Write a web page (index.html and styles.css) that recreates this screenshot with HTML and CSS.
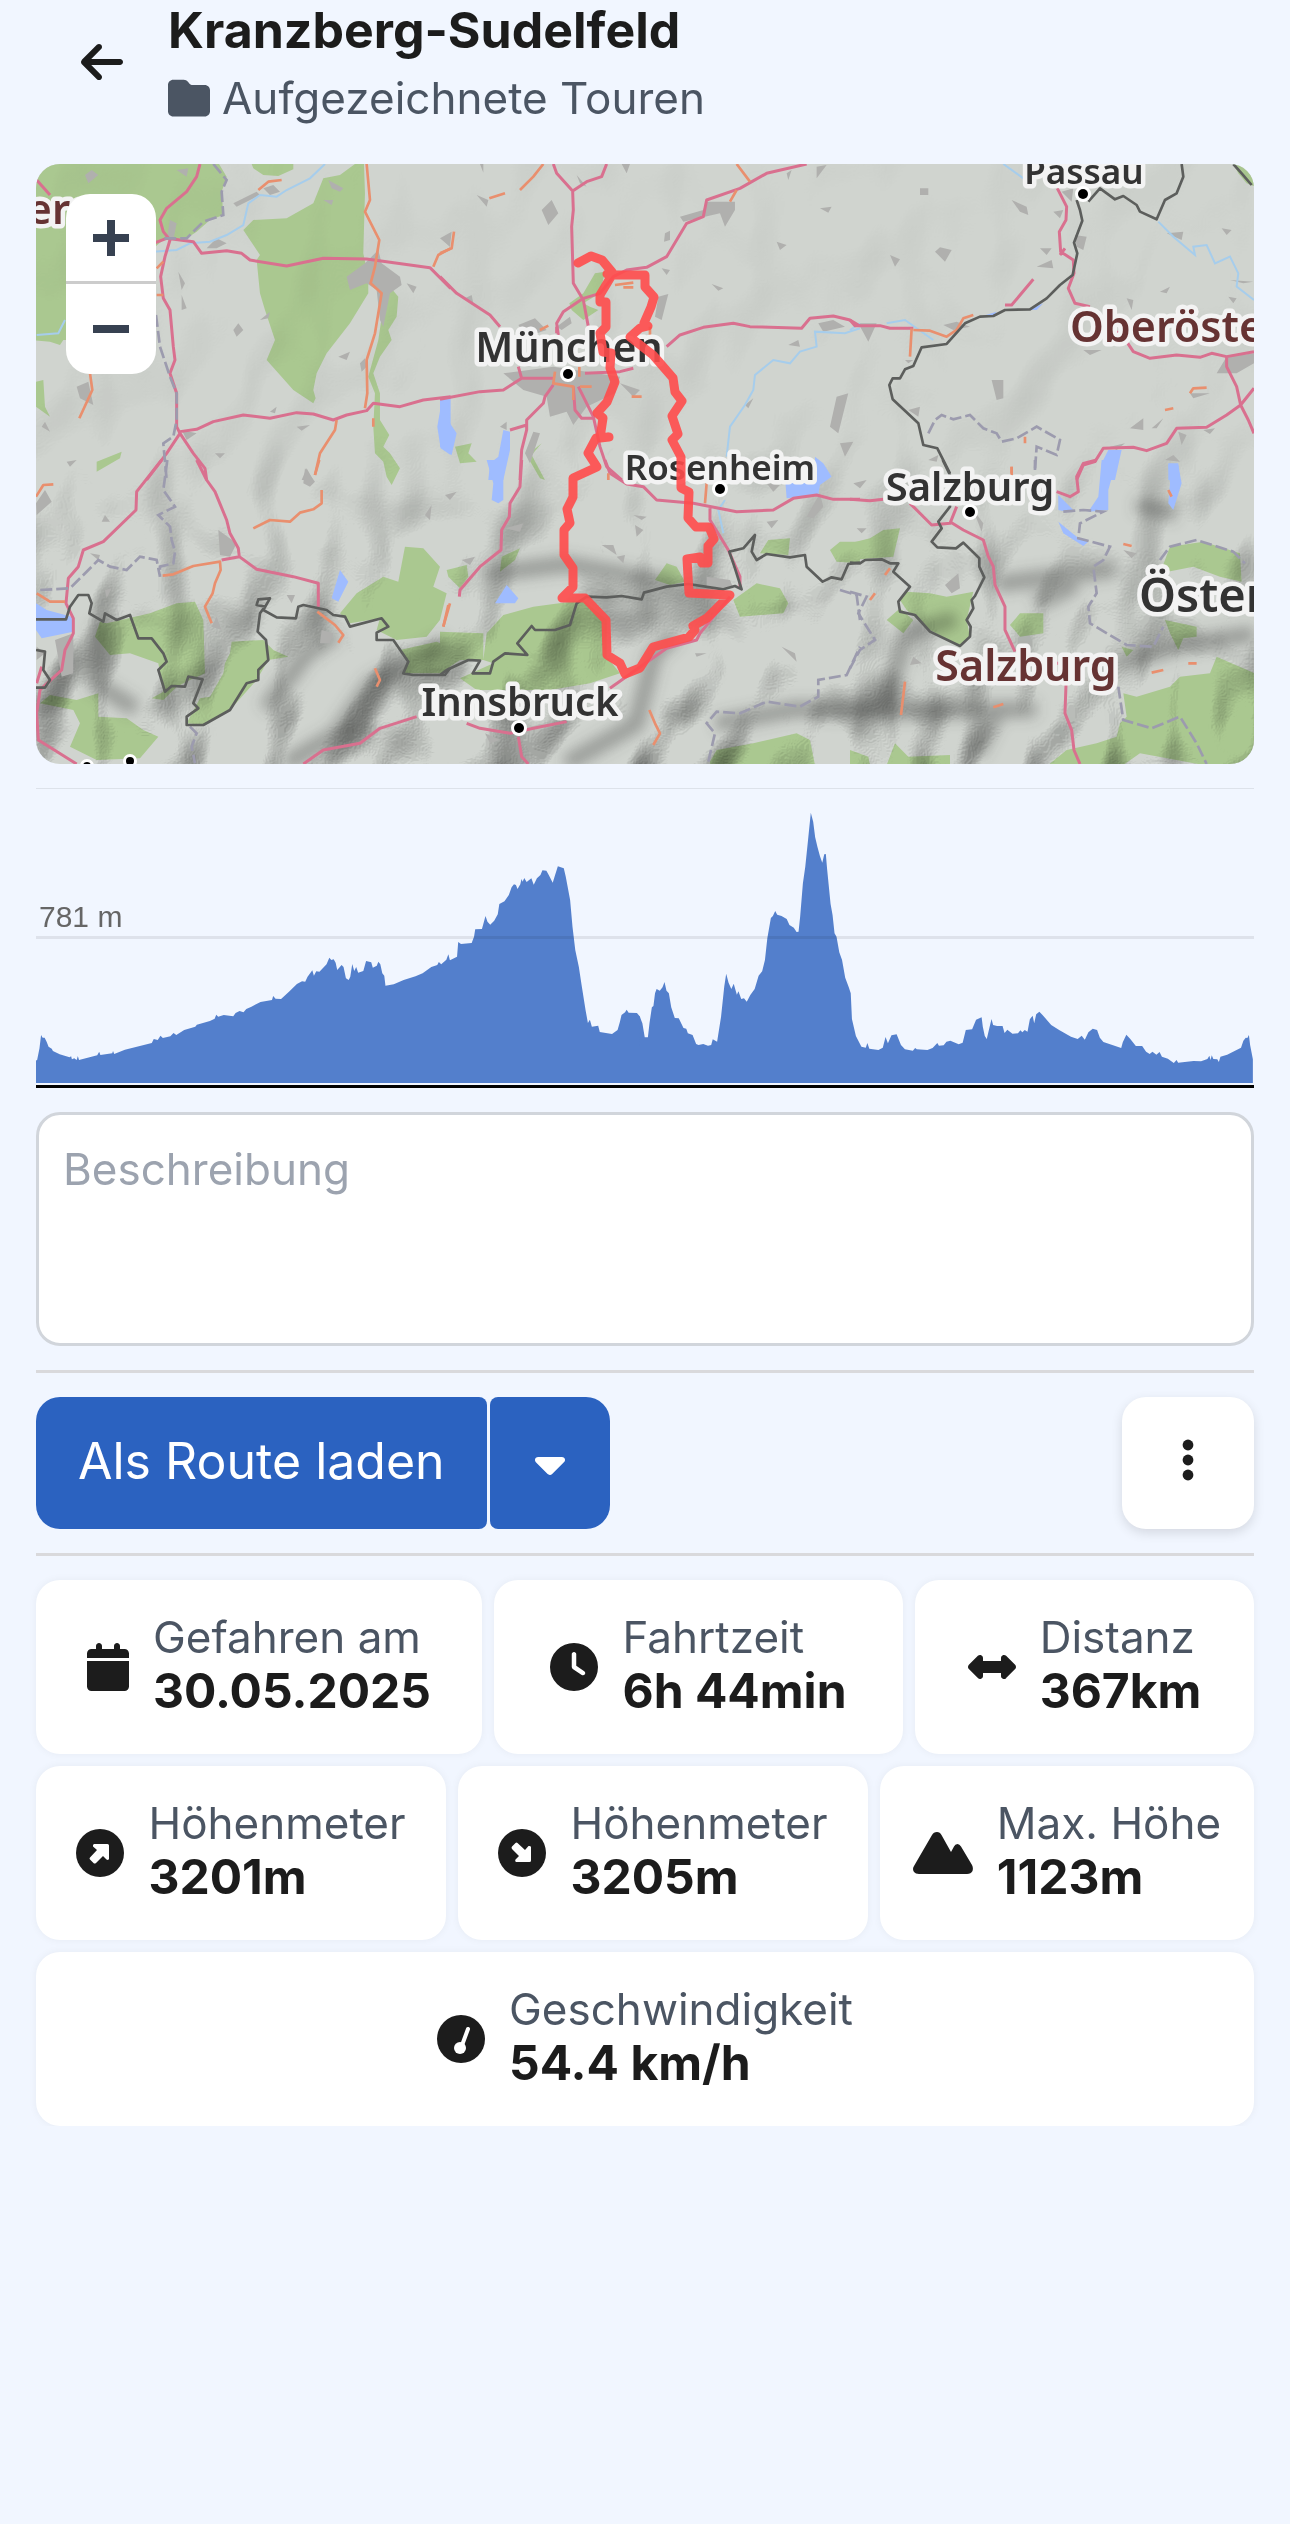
FILE: index.html
```html
<!DOCTYPE html>
<html lang="de">
<head>
    <meta charset="UTF-8">
    <meta name="viewport" content="width=device-width, initial-scale=1.0">
    <title>Kranzberg-Sudelfeld</title>
    <link rel="stylesheet" href="styles.css">
</head>
<body>
    <header class="header">
        <button type="button" class="back" aria-label="Zurück">
            <svg width="42" height="48" viewBox="0 0 448 512"><path d="M9.4 233.4c-12.5 12.5-12.5 32.8 0 45.3l160 160c12.5 12.5 32.8 12.5 45.3 0s12.5-32.8 0-45.3L109.2 288 416 288c17.7 0 32-14.3 32-32s-14.3-32-32-32l-306.7 0L214.6 118.6c12.5-12.5 12.5-32.8 0-45.3s-32.8-12.5-45.3 0l-160 160z"/></svg>
        </button>
        <div>
            <h1 class="title">Kranzberg-Sudelfeld</h1>
            <p class="folder">
                <svg width="42" height="42" viewBox="0 0 512 512"><path d="M64 480H448c35.3 0 64-28.7 64-64V160c0-35.3-28.7-64-64-64H288c-10.1 0-19.6-4.7-25.6-12.8L243.2 57.6C231.1 41.5 212.1 32 192 32H64C28.7 32 0 60.7 0 96V416c0 35.3 28.7 64 64 64z"/></svg>
                Aufgezeichnete Touren
            </p>
        </div>
    </header>

    <main class="content">
        <div class="map">
            <svg class="map-canvas" viewBox="0 0 1218 600" preserveAspectRatio="xMidYMid slice" role="img" aria-label="Karte der Tour">
                <defs>
                    <filter id="relief" x="0" y="0" width="100%" height="100%" color-interpolation-filters="sRGB">
                        <feTurbulence type="fractalNoise" baseFrequency="0.014 0.009" numOctaves="2" seed="11"/>
                        <feColorMatrix type="matrix" values="0 0 0 0 0  0 0 0 0 0  0 0 0 0 0  1 0 0 0 0"/>
                        <feGaussianBlur stdDeviation="3"/>
                        <feDiffuseLighting surfaceScale="32" diffuseConstant="1.25" lighting-color="#fff">
                            <feDistantLight azimuth="235" elevation="54"/>
                        </feDiffuseLighting>
                    </filter>
                    <linearGradient id="fade" x1="0" y1="0" x2="0" y2="1">
                        <stop offset="0" stop-color="#fff" stop-opacity=".04"/>
                        <stop offset=".45" stop-color="#fff" stop-opacity=".08"/>
                        <stop offset=".72" stop-color="#fff" stop-opacity=".5"/>
                        <stop offset="1" stop-color="#fff" stop-opacity=".75"/>
                    </linearGradient>
                    <mask id="alps"><rect width="1218" height="600" fill="url(#fade)"/></mask>
                    <filter id="soft"><feGaussianBlur stdDeviation="7"/></filter>
                </defs>
                <rect width="1218" height="600" fill="#d0d4cf"/>

                <!-- forest -->
                <g class="forest">
                    <path transform="translate(-6 -4) scale(.3333)" d="M0 0H560L590 50 575 95 580 165 540 180 500 215 470 235 400 240 340 290V540H100L90 555 60 545 0 540ZM975 12H1002L1005 100 1000 280 1015 350 1015 400 960 490 890 580 860 640 850 690 857 715 850 730 790 690 710 600 735 540 705 450 690 400 680 300 690 285 640 210 670 180 770 175 850 130 880 55 930 45ZM665 12H790V28L745 48 700 45 670 25ZM1080 380L1105 410 1100 470 1075 510 1085 540 1050 590 1030 640 1050 700 1050 780 1078 825 1060 860 1080 880 1110 925 1085 975 1070 950 1060 905 1035 880 1030 800 1035 700 1015 650 1045 540 1060 440ZM200 905L275 875 270 895 200 935ZM18 665L40 660 45 740 60 770 18 740Z"/>
                    <path transform="translate(404 -4) scale(.3333)" d="M465 340L495 335 480 400 430 430 450 440 475 450 430 480 395 450 388 430 430 400ZM45 860L95 850 85 880 110 905 60 910ZM305 850L275 885 315 960 300 955 268 900 280 870Z"/>
                    <path transform="translate(814 -4) scale(.3333)" d="M1150 12H1215V80L1190 70 1165 40Z"/>
                    <path transform="translate(-6 296) scale(.3333)" d="M230 490L360 460 440 430 495 425 520 480 525 640 480 660 440 680 400 720 365 715 400 695 385 610 300 580 240 585 195 530 210 485ZM605 545L700 540 730 570 775 590 715 600 680 660 600 750 520 795 470 790 510 715 540 710 580 640 585 610 600 580ZM120 860L150 790 130 750 30 730 60 705 140 720 205 700 205 770 290 775 340 810 385 830 330 895 200 900ZM930 460L980 400 1060 350 1105 365 1125 260 1180 265 1230 320 1210 380 1250 400 1230 480 1190 530 1100 540 1040 510 1050 475 960 490ZM1110 570L1220 545 1260 560V620L1240 640 1120 640 1135 600Z"/>
                    <path transform="translate(404 296) scale(.3333)" d="M0 515L130 520V600L60 600 0 640ZM130 600L140 520 190 465 280 440 430 420 500 480 500 590 540 640 450 670 330 690 110 690 60 655 160 610ZM20 330L80 315 85 350 60 385 25 350ZM185 290L240 265 225 300 180 335ZM645 360L680 310 710 320 735 365 690 375ZM880 420L950 370 1020 385 1045 430 1030 460 900 470ZM960 280L985 240 1050 235 1045 285ZM1170 270L1200 245 1260 245V310L1190 305ZM810 905L830 870 940 850 1070 820 1110 840 1125 915H810Z"/>
                    <path transform="translate(814 296) scale(.3333)" d="M0 250L60 235 100 210 150 205 130 290 0 300ZM150 420L170 395 240 400 290 410 370 395 350 480 360 530 330 560 240 510 170 450ZM110 480L150 445 190 480 160 520ZM480 495L510 460 580 460 580 520 510 530ZM930 340L960 260 1060 245 1170 280 1175 365 1110 350 1030 320ZM945 480L1040 500 1040 530 1000 535 985 570 960 520ZM820 700L860 710 960 680 990 650 1080 640 1100 590 1215 640V915H1060L870 880 820 915H595L650 870 740 850 800 830 810 790 830 770ZM110 915L135 850 175 890 300 885V915ZM0 870L55 890 60 915H0ZM815 560L850 570 830 590Z"/>
                </g>

                <!-- hill shading -->
                <g class="shade">
                    <rect x="-10" y="-10" width="1238" height="630" filter="url(#relief)" mask="url(#alps)"/>
                    <g class="valley" filter="url(#soft)">
                        <path d="M250 600L300 570 335 520 372 500 410 478M230 545L270 490 300 470M530 600L600 560 618 490 640 470M65 460L60 520 100 545M680 560L760 545 860 548 1000 545M850 540L870 470 920 455M1080 500L1150 480 1218 470M1000 440L1040 420M450 410L530 400 640 420M960 420L1080 405M1100 340L1140 350M940 590L960 550"/>
                    </g>
                </g>

                <!-- built-up areas -->
                <g class="town">
                    <path transform="translate(-6 -4) scale(.3333)" d="M165 45L185 30 205 45 175 70ZM440 30L475 25 470 50ZM700 85L730 75 750 95 720 105ZM610 130L680 95 690 105 620 140ZM880 120L910 120 905 135ZM895 60L940 85 930 95 905 85ZM530 265L560 235 590 250 560 265ZM410 240L420 180 440 190 430 240ZM445 335L465 370 455 390ZM455 405L470 445 455 450ZM610 510L625 490 640 510 620 530ZM690 480L720 455 715 475ZM1005 310L1045 270 1055 310 1110 350 1115 375 1080 400 1060 500 1050 480 1040 390 1010 370 960 390 950 350ZM1130 370L1160 380 1150 400ZM925 590L960 575 950 600ZM990 610L1005 595 1010 620 995 635ZM140 680L175 665 190 735 150 715ZM110 905L140 900 120 920ZM555 880L585 880 570 895ZM720 755L740 740 735 760ZM800 800L840 795 815 812ZM455 810L500 820 470 840ZM35 800L45 785 60 815ZM815 960L830 925 850 960ZM1240 240L1260 225V260Z"/>
                    <path transform="translate(404 -4) scale(.3333)" d="M305 150L335 120 355 160 325 195ZM110 105L145 120 140 140ZM410 45L440 80 420 70ZM720 170L790 150 800 125 885 125 885 150 855 200 840 160 730 185ZM675 220L690 212 690 240 672 245ZM1010 245L1040 255 1020 270ZM815 372L850 385 835 392ZM665 325L690 330 680 345ZM655 410L685 402 665 480 645 470ZM235 495L285 475 320 510 260 530ZM190 640L340 620 540 650 525 700 440 740 400 795 380 755 330 770 320 710 250 690ZM350 500L390 470 395 490 365 510ZM540 670L600 690 580 710ZM1045 555L1075 540 1080 560ZM1135 490L1180 480 1215 500 1150 515ZM1170 800L1190 710 1225 700 1195 820ZM1200 850L1240 845 1215 890ZM915 735L940 715 925 745ZM180 800L200 785 200 810ZM255 880L280 815 300 820 270 910ZM75 415L95 405 100 430ZM0 235L35 215 30 260ZM1040 40L1055 30 1045 60ZM1130 20L1160 15 1130 55ZM1140 145L1175 140 1165 158ZM120 12H130V38ZM545 12H570L560 40Z"/>
                    <path transform="translate(814 -4) scale(.3333)" d="M210 85H235V105H210ZM485 120L530 140 535 165 510 155ZM255 275L270 262 305 270 285 305ZM120 285L150 298 135 320ZM610 155L640 150 630 175ZM570 265L605 265 590 285ZM560 320L605 300 610 325ZM675 225L710 230 700 270 680 260ZM635 95L670 85 665 125ZM950 220L1000 215 995 240ZM1115 205L1145 210 1130 225ZM830 415L850 420 845 450ZM930 395L960 380 950 400ZM1140 360L1210 365 1180 370ZM1135 410L1160 415 1150 430ZM280 495L320 485 360 500 310 510ZM25 490L80 490 55 545ZM425 660L460 660 460 715 440 720ZM175 750L210 740 205 770ZM700 570L755 570 720 585ZM1130 590L1212 580V610L1160 640 1100 640ZM1020 700L1080 700 1030 715ZM840 805L880 775 880 810ZM905 805L940 775 920 805ZM985 815L1010 825 995 855ZM1060 810L1095 805 1080 822ZM780 860L825 850 800 870ZM945 900L970 885 990 905ZM235 900L265 885 260 905ZM165 600H190L175 610Z"/>
                    <path transform="translate(-6 296) scale(.3333)" d="M820 70L825 25 855 65 840 80ZM565 210L620 250 600 290 570 285ZM18 130L45 90 65 125 20 165ZM215 185L225 165 240 185ZM180 280L210 285 205 300ZM225 390L245 385 230 415ZM1185 165L1205 135 1200 180ZM770 405L795 405 785 430ZM875 510L910 520 900 550 870 550ZM75 540L130 520 130 640 95 650ZM20 560L45 580 20 600ZM545 500L560 470 575 510Z"/>
                    <path transform="translate(404 296) scale(.3333)" d="M15 105L50 95 30 120ZM195 205L250 190 240 215ZM65 300L105 290 90 315ZM580 165L620 170 605 180ZM585 195L610 210 590 230ZM485 255L520 255 530 285ZM530 290L555 285 550 310ZM980 185L1015 180 995 205ZM1100 170L1140 100 1150 140 1120 175ZM765 580L800 580 770 590ZM1025 560L1065 580 1070 605ZM135 820L180 840 150 850ZM800 350L870 360 880 385 800 380ZM980 70L1020 75 1000 95Z"/>
                    <path transform="translate(814 296) scale(.3333)" d="M10 70L50 60 30 85ZM20 205L50 205 35 220ZM370 150L400 190 395 215ZM820 270L860 280 845 295ZM285 375L325 340 330 385 305 400ZM190 590L215 610 180 615Z"/>
                </g>

                <!-- rivers and lakes -->
                <g class="river">
                    <path transform="translate(-6 -4) scale(.3333)" d="M885 12L840 55 770 90 740 110 690 105 655 130 640 195 590 225 540 245 480 250 440 270 370 275M105 480L85 520 20 525"/>
                    <path transform="translate(404 -4) scale(.3333)" d="M1260 505L1215 520 1125 515 1130 560 1080 575 1050 610 1000 600 945 645 940 690 915 735 870 800 860 890"/>
                    <path transform="translate(814 -4) scale(.3333)" d="M460 12L520 55M925 185L970 230 1035 285 1030 260 1070 255 1095 310 1140 290 1165 340 1160 380 1212 420M0 510L30 490M110 490L165 480 250 540"/>
                    <path transform="translate(404 296) scale(.3333)" d="M855 120L835 150 850 220M800 490L780 520"/>
                </g>
                <g class="lake">
                    <path transform="translate(-6 -4) scale(.3333)" d="M1235 725L1262 715V885L1232 865 1222 800Z"/>
                    <path transform="translate(404 -4) scale(.3333)" d="M0 720L25 715 30 790 50 820 35 885 0 860ZM190 810L210 815 210 870 190 960H145L150 910 175 890Z"/>
                    <path transform="translate(814 -4) scale(.3333)" d="M775 870L815 870 795 960H755L755 910ZM955 910L985 910 990 960H955ZM390 470L440 455 430 468ZM535 450L580 430 560 450Z"/>
                    <path transform="translate(-6 296) scale(.3333)" d="M930 330L955 365 925 425 905 415ZM18 430L50 450 125 470 130 515 35 535 18 510Z"/>
                    <path transform="translate(404 296) scale(.3333)" d="M140 0H190V120L175 130 155 120 160 70ZM1125 -10L1150 10 1175 50 1140 75 1135 105 1040 115 1035 50 1125 60ZM200 375L235 415 225 430 165 430Z"/>
                    <path transform="translate(814 296) scale(.3333)" d="M755 0H800L775 90 775 150 715 155 745 110ZM955 15L985 15 995 70 970 150 955 130 960 70ZM625 105L670 150 650 155 625 150ZM625 185L680 230 715 245 700 258 640 220Z"/>
                </g>

                <!-- roads -->
                <g class="road">
                    <path transform="translate(-6 -4) scale(.3333)" d="M510 12L500 50 470 95 410 145 390 180 400 215 420 240 405 290 392 350 400 415 420 450 430 560 435 600 420 640 440 700 440 800 450 820 410 880 350 960M370 250L410 235 490 245 515 280 590 272 635 280 660 300 770 318 880 295 1010 297 1200 323 1262 385M450 815L500 808 550 785 640 765 720 775 800 758 850 762 910 780 950 765 1010 752 1030 730 1110 740 1180 720 1262 710M450 820L490 880 525 925 530 960M20 60L60 105"/>
                    <path transform="translate(404 -4) scale(.3333)" d="M340 12L350 40 398 93 400 150 395 200 400 370 430 420 445 500M398 93L440 65 485 50 500 12M0 350L50 400 150 465 180 500M0 718L120 695 190 690 245 655 340 655M245 655L235 620M350 500L350 520M355 525L350 490 370 455 430 415 480 400 520 350 560 330 620 322 680 290 740 190 790 170 800 120 900 85 980 40 1100 12M680 560L720 525 790 502 880 490 930 500 1085 505 1110 475 1180 468 1230 480 1260 498M340 675L315 710 310 730 260 780 260 810 245 870 240 960M210 810L260 795M400 680L405 750 425 775 460 775M415 680L460 770 480 860 500 920 545 960M435 640L540 635 580 625"/>
                    <path transform="translate(814 -4) scale(.3333)" d="M0 480L15 497 90 497 120 505 190 505M465 435L485 435 550 358M622 85L650 140 648 180 628 215 632 275 670 300 672 340 655 385 675 430 720 440M630 285L645 265M800 515L830 545 850 575 900 595 980 585 1050 592 1085 580 1130 590 1212 575M1130 590L1130 620 1160 680 1172 735 1195 780 1212 820M1212 685L1172 735 1130 765 1070 802 980 805 950 850 890 872 850 862 760 865 735 905 700 915 680 960"/>
                    <path transform="translate(-6 296) scale(.3333)" d="M395 0L320 95 318 150 220 245 160 270 145 320 115 355 108 430 130 475 130 520 105 570 95 630 30 690 20 760 25 840 140 912M20 670L35 620M500 0L530 60 555 95 590 180 600 220 625 265 628 290 575 300M628 290L680 328 790 350 865 370 865 440M820 912L880 870 990 850 1050 805 1160 770"/>
                    <path transform="translate(404 296) scale(.3333)" d="M245 0L240 80 210 130 208 170 185 210 183 270 120 320 60 390 58 410M495 0L510 40 560 72 610 80 650 120 760 130 890 155 1000 150 1060 115 1130 105 1180 118 1260 118M810 145L810 180 865 270 900 350 900 385M870 410L780 520 770 540 680 565 510 685M80 790L120 805 210 820 280 805 380 785M235 830L245 890 265 912"/>
                    <path transform="translate(814 296) scale(.3333)" d="M0 118L60 122 100 118M180 130L245 195 300 190 320 140M300 185L340 210 400 240 415 290 430 320 435 375 465 440 465 510 495 575M610 610H640M648 675L645 760 665 810 672 870 690 912M740 0L700 10 680 50 685 95 660 110 620 95"/>
                </g>
                <g class="road minor">
                    <path transform="translate(-6 -4) scale(.3333)" d="M1010 12L1020 120 1005 155 1048 240 1035 320 1022 370 1055 400 1035 520 1010 600 1012 700 1005 745M685 90L715 65 755 60M920 780L915 810 870 880 855 945M180 640L187 690 148 775M400 305L380 325M380 405H400M1210 320L1225 285 1262 265M1030 775V800"/>
                    <path transform="translate(404 -4) scale(.3333)" d="M148 115L195 100M240 90L280 50 310 12M890 12L930 65M890 90L870 125M0 280L35 265 42 215M300 510L325 497M345 635L340 670 400 680 400 720M420 680H455M575 710L605 710M525 375L580 368M550 382H580M630 500V525M418 620V650"/>
                    <path transform="translate(814 -4) scale(.3333)" d="M185 505L180 590M190 510L240 512 290 530 320 510 340 475 370 465M1020 700L1030 685 1070 683M945 750L970 745M525 850L525 830M485 920V945"/>
                    <path transform="translate(-6 296) scale(.3333)" d="M868 0L855 45M875 90L875 130 850 148 810 158 780 185 720 180 670 205M18 110L40 75 70 73M398 347L430 343 490 318 570 305 572 330 555 370 548 400 525 440 545 490M20 400L60 425 105 425M862 455L915 495 940 525 925 548M1035 625L1050 660 1040 680M1260 430L1240 500"/>
                    <path transform="translate(404 296) scale(.3333)" d="M25 435L10 500M800 70L795 130M628 750L645 790 660 820 640 855M505 40V60"/>
                    <path transform="translate(814 296) scale(.3333)" d="M485 20V40M955 90L965 110M105 345L120 325M60 420L75 400M165 665L153 765M430 742L460 732M905 638L940 630M1015 610H1040M820 252L845 258"/>
                </g>

                <!-- borders -->
                <g class="region">
                    <path transform="translate(-6 -4) scale(.3333)" d="M550 12L590 60 575 95 580 165 520 185 470 235 400 235M378 465L390 560 420 650 440 700 440 780 430 830 400 850 410 960"/>
                    <path transform="translate(814 -4) scale(.3333)" d="M235 820L255 780 275 765 310 778 360 765 400 805 440 820 455 845 500 835 560 800 630 840 620 885 560 860 555 930"/>
                    <path transform="translate(-6 296) scale(.3333)" d="M412 0L400 90 435 140 385 165 420 200 425 240 435 275 430 310 390 320 390 350 380 300 330 290 290 330 240 320 205 300 120 385 30 390M480 800L500 820 485 860 495 910"/>
                    <path transform="translate(404 296) scale(.3333)" d="M805 905L825 820 800 790 830 755 900 760 980 725 1080 740 1135 710 1135 660 1220 645 1260 560M1200 390L1250 405 1260 480"/>
                    <path transform="translate(814 296) scale(.3333)" d="M555 0V30M640 155L700 150 760 155 690 190 685 235 780 260 760 300 730 320 740 400 715 440 720 490 830 555 910 560 940 500M930 300L960 260 1040 240 1150 275 1185 310M805 680L820 780 905 805 990 770 1040 850 1070 912M0 395L50 410 25 460 75 540 30 570 0 625"/>
                </g>
                <g class="border">
                    <path transform="translate(814 -4) scale(.3333)" d="M680 120L690 150 697 182 672 248 682 280 668 345 630 375 590 415 540 448 465 450 430 468 390 470 345 490 290 552 215 562 190 618 165 628 150 655 128 655 118 675 128 718 205 790 220 855 262 865 300 940M715 125L750 85 795 118 820 108 860 135 870 155 920 178 945 120 980 100 1000 50 995 12M1150 12L1175 40 1205 75"/>
                    <path transform="translate(-6 296) scale(.3333)" d="M18 478H108L120 440 145 405 175 405 185 430 178 460 220 485 225 460 260 480 300 465 325 535 365 535 400 580 410 605 385 630 405 695 425 678 465 680 475 650 518 658 490 730 505 745 470 770 470 795 520 795 600 750 650 670 685 660 685 630 715 600 708 540 683 515 690 460 705 440 680 435 685 418 720 415 700 450 740 472 798 475 805 440 820 435 890 450 910 465 945 470 960 500 1055 475 1075 500 1040 518 1040 540 1090 540 1135 605 1120 640 1150 645H1245L1260 625M18 570L45 575 40 630 60 660 45 683H18"/>
                    <path transform="translate(404 296) scale(.3333)" d="M0 645L20 630 85 600 120 602 98 640 150 640 160 605 195 580 262 585 232 550 275 498 285 510 345 510 390 495 410 430 440 410 500 412 545 408 605 418 612 398 680 380 745 372 850 388 885 378 905 388 885 325 868 275 910 265 945 225 935 275 950 300 980 282 1050 292 1095 285 1100 320 1148 365 1175 352 1205 358 1225 312 1260 308"/>
                    <path transform="translate(814 296) scale(.3333)" d="M278 0L300 45 300 140 265 185 275 205 245 245 262 262 318 265 340 248 388 295 388 320 403 352 375 408 365 420 370 445 350 480 362 500 360 530 330 558 240 515 195 465 150 455 145 425 180 380 130 335 145 310 120 310 95 298 45 300 30 310 0 308"/>
                </g>

                <g class="place">
                    <text x="533" y="198" font-size="41">München</text>
                    <text x="684" y="316" font-size="35">Rosenheim</text>
                    <text x="484" y="552" font-size="40">Innsbruck</text>
                    <text x="934" y="337" font-size="40">Salzburg</text>
                    <text x="1048" y="20" font-size="35">Passau</text>
                    <text x="1103" y="448" font-size="47" class="start">Österreich</text>
                    <text x="1034" y="178" font-size="43" class="start state">Oberösterreich</text>
                    <text x="990" y="517" font-size="43" class="state">Salzburg</text>
                    <text x="60" y="60" font-size="42" class="end state">Baden-Württemberg</text>
                </g>
                <g class="dot">
                    <circle cx="532" cy="210" r="5"/>
                    <circle cx="684" cy="325" r="5"/>
                    <circle cx="483" cy="564" r="5"/>
                    <circle cx="934" cy="348" r="5"/>
                    <circle cx="1047" cy="30" r="5"/>
                    <circle cx="94" cy="597" r="4"/>
                    <circle cx="51" cy="602" r="4"/>
                </g>

                <g class="track">
                    <path d="M542 99L555 92 566 96 576 108 571 110 577 111H609V123L618 133 615 143 608 159 612 162 604 164 594 173 617 191 637 214 639 228 646 237 636 252 642 270 636 276 645 293V324L653 328 652 354 660 363H673L678 375 672 382V399H666L664 393 651 395 653 429 694 431 671 454 657 462 659 466 653 473 617 483 604 504 589 510 584 499 571 491 570 456 549 434H526L537 423V404L528 391V366L534 359 531 345 537 333V314L561 303 552 289 560 274 573 273 564 274 567 254 561 249 571 238 579 218 574 204 575 189 567 188 564 169 570 163V138H564V131L576 111"/>
                </g>
            </svg>
            <div class="zoom">
                <button type="button" aria-label="Vergrößern">
                    <svg width="36" height="36" viewBox="0 0 36 36"><path d="M14 0h8v14h14v8H22v14h-8V22H0v-8h14z"/></svg>
                </button>
                <button type="button" aria-label="Verkleinern">
                    <svg width="36" height="36" viewBox="0 0 36 36"><path d="M0 14h36v8H0z"/></svg>
                </button>
            </div>
        </div>

        <svg class="profile" viewBox="0 0 1218 300" role="img" aria-label="Höhenprofil">
            <g class="area">
                <path transform="translate(-6 -8) scale(.3954 .3333)" d="M15 909V842L18 840 24 805 28 765 32 773 37 773 42 785 47 800 55 806 58 813 75 823 100 832 104 829 106 838 112 835 118 840 121 828 124 840 170 826 175 815 178 825 208 820 210 813 213 822 240 809 308 789 313 777 323 780 330 767 336 774 355 769 363 759 370 765 390 750 418 740 422 734 455 723 467 716 471 704 476 710 490 705 514 709 520 699 530 693 540 697 547 687 560 680 583 666 612 660 615 648 621 656 635 657 655 635 675 612 688 604 696 605 702 590 714 571 718 587 724 574 732 575 750 553 757 533 762 540 768 538 773 548 777 570 788 555 793 561 799 595 806 600 810 590 815 552 820 573 825 561 830 578 843 573 850 543 863 547 867 563 877 557 881 545 886 553 891 580 896 587 899 617 920 613 945 600 975 589 993 580 1015 561 1030 555 1034 546 1040 553 1053 539 1058 523 1062 541 1080 530 1083 486 1090 492 1117 489 1123 470 1126 448 1143 447 1152 408 1157 425 1164 434 1174 422 1183 403 1187 372 1200 364 1211 345 1218 322 1224 313 1229 315 1233 327 1240 313 1243 297 1246 305 1250 294 1256 306 1268 295 1274 314 1282 295 1291 285 1296 271 1306 272 1312 285 1322 308 1328 285 1335 259 1350 265 1355 290 1366 360 1372 440 1379 510 1388 560 1395 615 1405 690 1411 729 1416 719 1421 740 1437 737 1441 756 1472 762 1486 750 1492 725 1496 705 1505 697 1509 689 1514 698 1535 699 1543 710V909Z"/>
                <path transform="translate(604 -8) scale(.3954 .3333)" d="M-2 909V708L0 712 6 730 12 772 20 772 24 730 30 682 34 678 38 640 42 627 50 632 57 622 62 606 67 632 73 640 79 682 88 714 98 715 110 744 117 746 121 760 133 765 142 792 148 795 160 792 172 797 180 795 184 778 195 785 205 710 213 620 218 581 224 608 231 627 237 611 245 644 249 634 256 657 263 655 270 665 279 645 290 627 300 587 309 574 316 540 322 475 331 414 336 408 342 393 347 404 358 408 371 417 378 435 389 443 396 456 401 455 405 410 412 310 418 260 425 180 432 98 438 125 443 172 449 202 455 228 461 248 466 223 470 222 473 265 482 372 487 405 492 460 497 470 504 517 511 540 519 593 528 622 533 640 536 717 546 768 560 800 571 803 575 789 580 806 603 810 614 803 621 771 627 790 636 766 649 763 660 795 670 808 690 812 696 804 700 808 727 810 740 804 752 789 756 797 768 796 775 785 785 782 800 790 806 793 816 788 824 750 840 748 850 719 864 712 867 740 872 768 877 777 884 742 889 717 893 735 903 738 917 738 922 759 929 749 942 761 956 760 962 751 967 757 973 750 980 755 986 718 993 707 997 730 1002 703 1010 695 1018 705 1040 735 1060 750 1090 770 1107 777 1117 767 1125 779 1134 757 1145 746 1156 750 1163 773 1172 786 1217 804 1221 787 1230 764 1240 777 1254 798 1270 798 1280 815 1289 822 1296 815 1306 824 1314 816 1320 830 1335 836 1350 849 1357 840 1361 848 1400 843 1419 844 1435 837 1440 827 1443 840 1446 826 1450 837 1460 838 1464 846 1468 830 1485 824 1520 803 1526 782 1532 773 1536 774 1540 765 1543 795 1550 838V909Z"/>
            </g>
            <path class="grid-top" d="M0 .5H1218"/>
            <path class="grid" d="M0 149.500H1218"/>
            <path class="axis" d="M0 298.500H1218"/>
            <text x="3" y="139">781 m</text>
        </svg>

        <textarea class="description" placeholder="Beschreibung" aria-label="Beschreibung"></textarea>

        <hr>

        <div class="actions">
            <div class="split">
                <button type="button" class="load">Als Route laden</button>
                <button type="button" class="more" aria-label="Weitere Optionen">
                    <svg width="30" height="48" viewBox="0 0 320 512"><path d="M137.4 374.6c12.500 12.500 32.800 12.500 45.300 0l128-128c9.200-9.200 11.900-22.900 6.900-34.900s-16.600-19.800-29.600-19.800L32 192c-12.900 0-24.600 7.800-29.600 19.800s-2.200 25.700 6.900 34.900l128 128z"/></svg>
                </button>
            </div>
            <button type="button" class="menu" aria-label="Menü">
                <svg width="12" height="48" viewBox="0 0 12 48"><circle cx="6" cy="6" r="5.400"/><circle cx="6" cy="21" r="5.400"/><circle cx="6" cy="36" r="5.400"/></svg>
            </button>
        </div>

        <hr>

        <section class="stats">
            <div class="row row-1">
                <div class="card">
                    <svg width="42" height="48" viewBox="0 0 448 512"><path d="M96 32V64H48C21.500 64 0 85.500 0 112v48H448V112c0-26.500-21.500-48-48-48H352V32c0-17.700-14.300-32-32-32s-32 14.300-32 32V64H160V32c0-17.700-14.300-32-32-32S96 14.300 96 32zM448 192H0V464c0 26.500 21.500 48 48 48H400c26.500 0 48-21.500 48-48V192z"/></svg>
                    <dl><dt>Gefahren am</dt><dd>30.05.2025</dd></dl>
                </div>
                <div class="card">
                    <svg width="48" height="48" viewBox="0 0 512 512"><path d="M256 0a256 256 0 1 1 0 512A256 256 0 1 1 256 0zM232 120V256c0 8 4 15.500 10.700 20l96 64c11 7.400 25.900 4.400 33.300-6.700s4.400-25.900-6.700-33.300L280 243.200V120c0-13.300-10.700-24-24-24s-24 10.700-24 24z"/></svg>
                    <dl><dt>Fahrtzeit</dt><dd>6h 44min</dd></dl>
                </div>
                <div class="card">
                    <svg width="48" height="48" viewBox="0 0 512 512"><path d="M406.600 374.600l96-96c12.500-12.500 12.500-32.800 0-45.300l-96-96c-9.200-9.200-22.900-11.900-34.900-6.900s-19.800 16.600-19.800 29.600l0 32L160 192l0-32c0-12.900-7.800-24.600-19.800-29.600s-25.700-2.200-34.900 6.900l-96 96c-12.500 12.500-12.500 32.800 0 45.300l96 96c9.200 9.200 22.900 11.900 34.900 6.900s19.800-16.600 19.800-29.600l0-32L352 320l0 32c0 12.900 7.800 24.600 19.800 29.600s25.700 2.200 34.900-6.900z"/></svg>
                    <dl><dt>Distanz</dt><dd>367km</dd></dl>
                </div>
            </div>
            <div class="row row-2">
                <div class="card">
                    <svg width="48" height="48" viewBox="0 0 48 48"><circle cx="24" cy="24" r="24"/><path fill="#fff" d="M18 15H31.500Q33 15 33 16.500V30Q32 31.500 30.500 30.500L27 27 20 34Q18.500 35 17.500 34L14 30.500Q13 29.500 14 28.500L21 21 17 17.500Q16.500 15.500 18 15Z"/></svg>
                    <dl><dt>Höhenmeter</dt><dd>3201m</dd></dl>
                </div>
                <div class="card">
                    <svg width="48" height="48" viewBox="0 0 48 48"><circle cx="24" cy="24" r="24"/><path fill="#fff" d="M33 18V31.500Q33 33 31.500 33H18Q16.500 32 17.500 30.500L21 27 14 20Q13 18.500 14 17.500L17.500 14Q18.500 13 19.500 14L27 21 30.500 17Q32.500 16.500 33 18Z"/></svg>
                    <dl><dt>Höhenmeter</dt><dd>3205m</dd></dl>
                </div>
                <div class="card">
                    <svg width="60" height="48" viewBox="0 0 60 48"><path d="M24 3Q20.500 3 19 6L1 37Q-1 40 1 43 2.500 45 6 45H54Q58 45 59.500 42 60.500 39 59 36L48 17.500Q46.500 15 44.500 15 42 15 41 17.500L38 23 28.500 6Q27 3 24 3Z"/></svg>
                    <dl><dt>Max. Höhe</dt><dd>1123m</dd></dl>
                </div>
            </div>
            <div class="row">
                <div class="card">
                    <svg width="48" height="48" viewBox="0 0 48 48"><circle cx="24" cy="24" r="24"/><path d="M24 33L31 14" stroke="#fff" stroke-width="4" stroke-linecap="round"/><circle cx="23" cy="33" r="6" fill="#fff"/></svg>
                    <dl><dt>Geschwindigkeit</dt><dd>54.4 km/h</dd></dl>
                </div>
            </div>
        </section>
    </main>
</body>
</html>
```
FILE: styles.css
```css
* {
    box-sizing: border-box;
}
body {
    margin: 0;
    padding: 0 36px;
    background-color: #f1f6ff;
    color: #1c1c1c;
    font-family: Inter, "Open Sans", sans-serif;
    font-size: 44px;
}
button {
    display: flex;
    align-items: center;
    justify-content: center;
    padding: 0;
    border: none;
    background: none;
    color: inherit;
    font-family: inherit;
    cursor: pointer;
}
svg {
    flex: none;
    fill: currentColor;
}
hr {
    width: 100%;
    height: 3px;
    margin: 0;
    border: none;
    background-color: #d9d9dc;
}

.header {
    display: flex;
    align-items: flex-start;
    padding-bottom: 36px;
}
.back {
    width: 132px;
    height: 124px;
}
.title {
    margin: 0;
    font-size: 50px;
    line-height: 60px;
    font-weight: 700;
}
.folder {
    display: flex;
    align-items: center;
    gap: 12px;
    margin: 8px 0 0;
    color: #4b5563;
    line-height: 60px;
}

.content {
    display: flex;
    flex-direction: column;
    gap: 24px;
}

/* map */
.map {
    position: relative;
    overflow: hidden;
    border-radius: 24px;
}
.map-canvas {
    display: block;
    width: 100%;
}
.forest {
    fill: #aac890;
}
.shade {
    mix-blend-mode: multiply;
}
.valley {
    fill: none;
    stroke: #555;
    stroke-width: 16px;
    stroke-opacity: .4;
}
.town {
    fill: #b0b0ae;
}
.river {
    fill: none;
    stroke: #a6cdec;
    stroke-width: 6px;
}
.lake {
    fill: #9fbcff;
}
.road {
    fill: none;
    stroke: #d9708f;
    stroke-width: 9px;
    stroke-linejoin: round;
}
.minor {
    stroke: #e98f6e;
    stroke-width: 8px;
}
.region {
    fill: none;
    stroke: #9c9bae;
    stroke-width: 8px;
    stroke-dasharray: 36 12;
}
.border {
    fill: none;
    stroke: #5c5e5c;
    stroke-width: 8px;
    stroke-linejoin: round;
}
.place {
    fill: #333;
    stroke: #f3f3f3;
    stroke-width: 9px;
    stroke-linejoin: round;
    paint-order: stroke;
    text-anchor: middle;
    font-family: "Noto Sans", sans-serif;
    font-weight: 600;
}
.start {
    text-anchor: start;
}
.end {
    text-anchor: end;
}
.state {
    fill: #633;
}
.dot {
    fill: #000;
    stroke: #fff;
    stroke-width: 6px;
    paint-order: stroke;
}
.track {
    fill: none;
    stroke: #ff4b4b;
    stroke-width: 9px;
    stroke-opacity: .9;
    stroke-linecap: round;
    stroke-linejoin: round;
}
.zoom {
    position: absolute;
    top: 30px;
    left: 30px;
    width: 90px;
    overflow: hidden;
    border-radius: 24px;
    background-color: #fff;
    color: #374151;
}
.zoom button {
    width: 90px;
    height: 90px;
}
.zoom button:first-child {
    border-bottom: 3px solid #ccc;
}

/* elevation profile */
.profile {
    display: block;
    width: 100%;
}
.profile text {
    fill: #666;
    font-family: "Liberation Sans", Arial, sans-serif;
    font-size: 30px;
}
.area {
    fill: #537fcc;
}
.grid-top {
    stroke: #dde2ea;
    stroke-width: 1px;
}
.grid {
    stroke: #000;
    stroke-opacity: .08;
    stroke-width: 3px;
}
.axis {
    stroke: #000;
    stroke-width: 3px;
}

.description {
    display: block;
    width: 100%;
    height: 234px;
    padding: 24px;
    border: 3px solid #d1d5db;
    border-radius: 24px;
    background-color: #fff;
    color: inherit;
    font-family: inherit;
    font-size: 44px;
    line-height: 60px;
    resize: none;
}
.description::placeholder {
    color: #9ca3af;
}

.actions {
    display: flex;
    justify-content: space-between;
}
.split {
    display: flex;
    gap: 3px;
}
.load,
.more {
    height: 132px;
    background-color: #2b62c0;
    color: #fff;
    font-size: 50px;
}
.load {
    padding: 0 42px 4px;
    border-radius: 24px 8px 8px 24px;
}
.more {
    width: 120px;
    border-radius: 8px 24px 24px 8px;
}
.menu {
    width: 132px;
    height: 132px;
    border-radius: 24px;
    background-color: #fff;
    box-shadow: 0 4px 12px rgba(0, 0, 0, .12);
}

/* stats */
.stats {
    display: flex;
    flex-direction: column;
    gap: 12px;
}
.row {
    display: grid;
    gap: 12px;
}
.row-1 {
    grid-template-columns: 446fr 409fr 339fr;
}
.row-2 {
    grid-template-columns: 410fr 410fr 374fr;
}
.card {
    display: flex;
    align-items: center;
    justify-content: center;
    gap: 24px;
    height: 174px;
    border-radius: 24px;
    background-color: #fff;
    box-shadow: 0 0 9px rgba(0, 0, 0, .05);
}
.card dl {
    margin: 0;
    padding-bottom: 6px;
}
.card dt {
    color: #4b5563;
    line-height: 54px;
}
.card dd {
    margin: 0;
    font-size: 48px;
    line-height: 54px;
    font-weight: 700;
}
```
